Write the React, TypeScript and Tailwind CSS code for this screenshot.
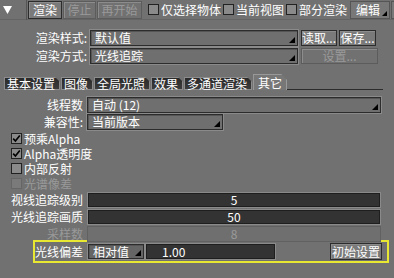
import React from 'react';

const FONT = { fontFamily: '"Noto Sans CJK SC", "Noto Sans", sans-serif' };

// small black corner triangle used on popup menus
const Corner: React.FC<{ size?: number }> = ({ size = 6 }) => (
    <span
        className="absolute right-[2px] bottom-[2px] border-l-transparent border-b-black"
        style={{ borderLeftWidth: size, borderBottomWidth: size, borderStyle: 'solid', borderTopWidth: 0, borderRightWidth: 0 }}
    />
);

const Check: React.FC<{ checked?: boolean; disabled?: boolean }> = ({ checked, disabled }) => (
    <span className={`relative inline-flex w-[11px] h-[11px] shrink-0 items-center justify-center border ${disabled ? 'border-[#666] bg-[#7a7a7a]' : 'border-[#222] bg-[#8a8a8a]'}`}>
        {checked && (
            <svg width="9" height="9" viewBox="0 0 9 9">
                <path d="M1.2 4.6 L3.4 7 L7.8 1.4" fill="none" stroke="#000" strokeWidth="1.6" />
            </svg>
        )}
    </span>
);

const Dropdown: React.FC<{ text: string; className?: string }> = ({ text, className }) => (
    <div className={`relative shrink-0 h-[16px] border border-[#2c2c2c] shadow-[inset_1px_1px_0_#555,0_0_0_1px_#8a8a8a] bg-[#6f6f6f] text-white leading-[14px] pl-[4px] ${className ?? ''}`}>
        {text}
        <Corner />
    </div>
);

const Button: React.FC<{ text: string; disabled?: boolean; className?: string }> = ({ text, disabled, className }) => (
    <div className={`shrink-0 h-[16px] flex items-center justify-center border ${disabled ? 'border-[#5c5c5c] text-[#9a9a9a]' : 'border-[#2c2c2c] text-white bg-[#7a7a7a]'} shadow-[inset_1px_1px_0_#8c8c8c] leading-[14px] ${className ?? ''}`}>
        {text}
    </div>
);

const Field: React.FC<{ value: string; disabled?: boolean }> = ({ value, disabled }) => (
    <div className={`w-[294px] h-[16px] flex items-center justify-center border leading-[14px] ${disabled ? 'border-[#616161] text-[#9a9a9a] bg-[#6f6f6f]' : 'border-[#8a8a8a] bg-[#333] text-white shadow-[inset_0_0_0_1px_#1e1e1e]'}`}>
        {value}
    </div>
);

const tabs = ['基本设置', '图像', '全局光照', '效果', '多通道渲染'];

export default function App() {
    return (
        <div className="w-[394px] h-[278px] bg-[#717171] overflow-hidden text-white select-none whitespace-nowrap text-[12px] leading-[16px]" style={FONT}>
            {/* top toolbar */}
            <div className="flex h-[20px] items-center border-b border-[#646464]">
                <div className="shrink-0 w-[27px] h-[20px] flex items-center border-r border-[#555] pl-[3px]">
                    <svg width="9" height="8" viewBox="0 0 9 8"><path d="M0 0 H9 L4.5 8 Z" fill="#fff" /></svg>
                </div>
                <div className="flex shrink-0 gap-[1px] ml-[1px]">
                    <Button text="渲染" className="w-[34px] !h-[18px]" />
                    <Button text="停止" disabled className="w-[33px] !h-[18px]" />
                    <Button text="再开始" disabled className="w-[45px] !h-[18px]" />
                </div>
                <div className="flex shrink-0 items-center gap-[2px] ml-[6px]">
                    <Check /> <span>仅选择物体</span>
                    <Check /> <span>当前视图</span>
                    <Check /> <span>部分渲染</span>
                </div>
                <div className="relative shrink-0 ml-[3px] w-[40px] h-[18px] flex items-center pl-[5px] bg-[#787878] border border-[#555]">
                    编辑
                    <Corner size={5} />
                </div>
                <div className="shrink-0 ml-[1px] w-[10px] h-[18px] border border-[#555] bg-[#787878]" />
            </div>

            {/* style / method */}
            <div className="flex flex-col gap-[2px] mt-[10px]">
                <div className="flex items-center">
                    <span className="w-[88px] text-right pr-[1px]">渲染样式:</span>
                    <Dropdown text="默认值" className="ml-[2px] w-[208px]" />
                    <Button text="读取..." className="ml-[3px] w-[36px]" />
                    <Button text="保存..." className="ml-[2px] w-[37px]" />
                </div>
                <div className="flex items-center">
                    <span className="w-[88px] text-right pr-[1px]">渲染方式:</span>
                    <Dropdown text="光线追踪" className="ml-[2px] w-[208px]" />
                    <Button text="设置..." disabled className="ml-[3px] w-[77px]" />
                </div>
            </div>

            {/* tabs */}
            <div className="flex items-end mt-[10px] pl-[4px] h-[16px]">
                {tabs.map((t) => (
                    <div
                        key={t}
                        className="shrink-0 h-[13px] mr-[1px] pl-[2px] pr-[4px] flex items-center bg-gradient-to-b from-[#2a2a2a] to-[#3c3c3c] border border-[#8c8c8c] leading-[12px] [clip-path:polygon(0_0,calc(100%-5px)_0,100%_5px,100%_100%,0_100%)]"
                    >
                        {t}
                    </div>
                ))}
                <div className="shrink-0 h-[16px] pl-[4px] pr-[4px] flex items-start pt-[1px] bg-[#777] border border-b-0 border-[#999] leading-[13px] [clip-path:polygon(0_0,calc(100%-6px)_0,100%_6px,100%_100%,0_100%)]">
                    其它
                </div>
                <div className="w-[96px] h-[1px] bg-[#2c2c2c]" />
            </div>

            {/* thread / compat */}
            <div className="flex flex-col gap-[1px] mt-[7px]">
                <div className="flex items-center">
                    <span className="w-[83px] text-right">线程数</span>
                    <Dropdown text="自动 (12)" className="ml-[4px] w-[294px]" />
                </div>
                <div className="flex items-center">
                    <span className="w-[83px] text-right">兼容性:</span>
                    <Dropdown text="当前版本" className="ml-[4px] w-[136px]" />
                </div>
            </div>

            {/* checkboxes */}
            <div className="flex flex-col pl-[11px] mt-[1px] leading-[15px]">
                <div className="flex items-center gap-[2px]"><Check checked /><span>预乘Alpha</span></div>
                <div className="flex items-center gap-[2px]"><Check checked /><span>Alpha透明度</span></div>
                <div className="flex items-center gap-[2px]"><Check /><span>内部反射</span></div>
                <div className="flex items-center gap-[2px] text-[#999]"><Check disabled /><span>光谱像差</span></div>
            </div>

            {/* numeric fields */}
            <div className="flex flex-col gap-[1px] mt-[1px]">
                <div className="flex items-center">
                    <span className="w-[83px] text-right">视线追踪级别</span>
                    <div className="ml-[4px]"><Field value="5" /></div>
                </div>
                <div className="flex items-center">
                    <span className="w-[83px] text-right">光线追踪画质</span>
                    <div className="ml-[4px]"><Field value="50" /></div>
                </div>
                <div className="flex items-center">
                    <span className="w-[83px] text-right text-[#999]">采样数</span>
                    <div className="ml-[4px]"><Field value="8" disabled /></div>
                </div>
            </div>

            {/* ray bias (highlighted) */}
            <div className="ml-[33px] w-[356px] h-[23px] -mt-[2px] border-2 border-[#e8e832] flex items-center">
                <span className="w-[48px] text-right">光线偏差</span>
                <Dropdown text="相对值" className="ml-[5px] w-[56px] !h-[15px] bg-[#656565]" />
                <div className="shrink-0 ml-[2px] w-[129px] h-[15px] flex items-center pl-[15px] bg-[#333] border border-[#1e1e1e] shadow-[0_0_0_1px_#8a8a8a] leading-[13px]">1.00</div>
                <Button text="初始设置" className="ml-[55px] w-[52px] !h-[17px] bg-[#5e5e5e]" />
            </div>
        </div>
    );
}
